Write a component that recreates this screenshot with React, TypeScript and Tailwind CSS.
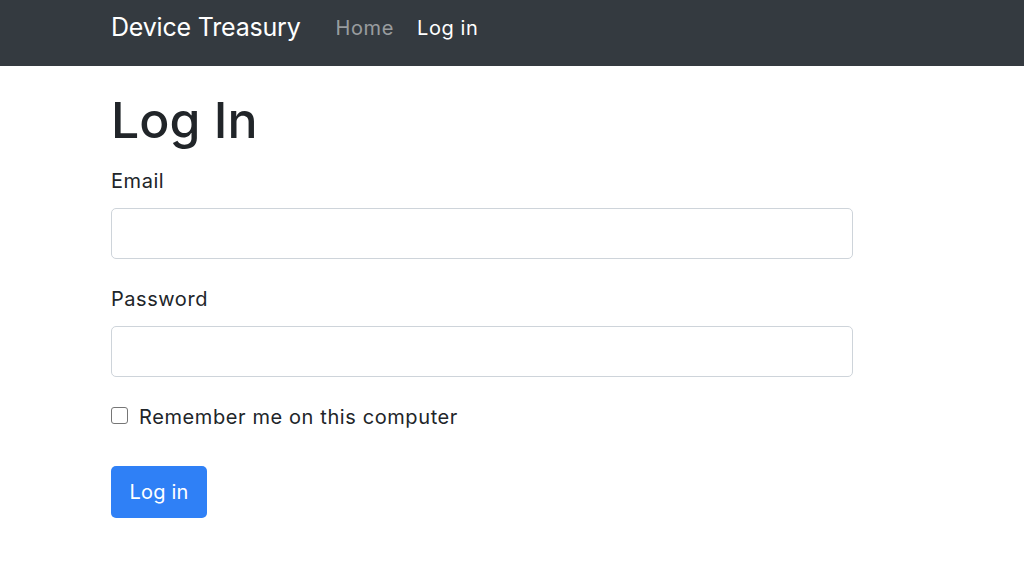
export default function App() {
  return (
    <div className="min-h-[561px] bg-white font-['Inter',sans-serif] text-[#212529]">
      <nav className="h-[66px] bg-[#343a40] flex items-start pl-[111px]">
        <span className="mt-[9px] text-[25px] leading-[37.5px] tracking-[-0.2px] text-white">Device Treasury</span>
        <div className="flex mt-[13px] ml-[35px] gap-[23px] text-[20px] leading-[30px] tracking-[0.6px]">
          <span className="text-white/50">Home</span>
          <span className="text-white">Log in</span>
        </div>
      </nav>
      <main className="ml-[111px] w-[742px]">
        <h1 className="mt-[24px] text-[50px] leading-[60px] font-medium">Log In</h1>
        <label className="block mt-[16px] text-[20px] leading-[30px] tracking-[0.55px] mb-[12px]">Email</label>
        <div className="h-[51px] w-full border border-[#ced4da] rounded-[5px] bg-white" />
        <label className="block mt-[25px] text-[20px] leading-[30px] tracking-[0.55px] mb-[12px]">Password</label>
        <div className="h-[51px] w-full border border-[#ced4da] rounded-[5px] bg-white" />
        <div className="mt-[25px] flex items-start">
          <div className="mt-[5px] w-[17px] h-[17px] border border-[#767676] rounded-[3px] bg-white" />
          <span className="ml-[11px] text-[20px] leading-[30px] tracking-[0.6px]">Remember me on this computer</span>
        </div>
        <div className="mt-[34px] w-[96px] h-[52px] rounded-[5px] bg-[#2f80f6] flex items-center justify-center text-white text-[20px] leading-[30px] tracking-[0.2px]">
          Log in
        </div>
      </main>
    </div>
  );
}
